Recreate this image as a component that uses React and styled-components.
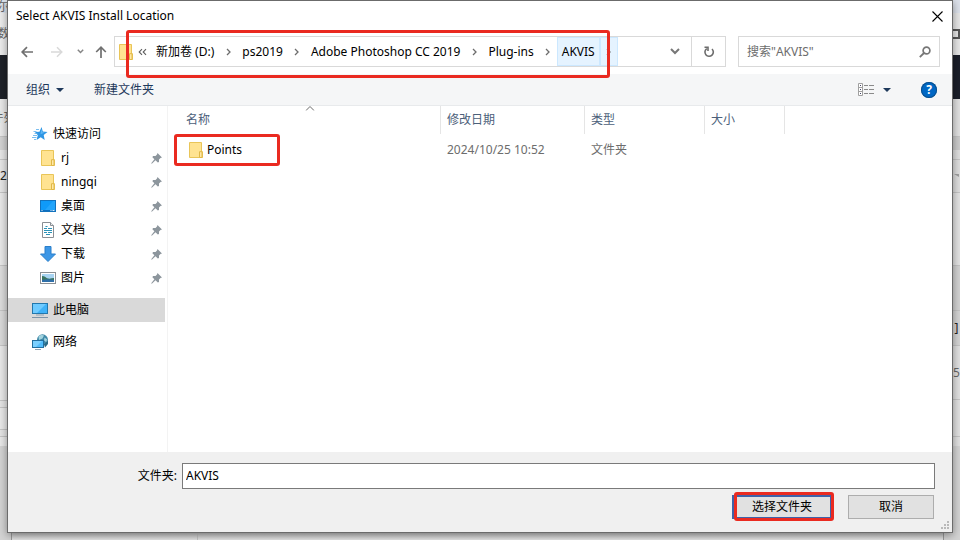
import React, { useState } from "react";
import styled, { createGlobalStyle, css } from "styled-components";

const places = [
  { name: "rj", icon: "folder" },
  { name: "ningqi", icon: "folder" },
  { name: "桌面", icon: "desktop" },
  { name: "文档", icon: "document" },
  { name: "下载", icon: "download" },
  { name: "图片", icon: "picture" },
];

const crumbs = ["新加卷 (D:)", "ps2019", "Adobe Photoshop CC 2019", "Plug-ins"];

// windows behind the dialog, top to bottom
const leftBands = [
  { h: 13, bg: "#dfe4ec", text: "尔" },
  { h: 42, bg: "#ececec", text: "数" },
  { h: 44, bg: "#1f2229" },
  { h: 37, bg: "#e9e9e9", text: "件列" },
  { h: 14, bg: "#d3d3d3", line: true },
  { h: 9, bg: "#e6e6e6" },
  { h: 33, bg: "#e6e6e6", line: true, text: "2", dark: true },
  { h: 73, bg: "#e8e8e8", line: true },
  { h: 45, bg: "#dcdcdc", line: true },
  { h: 35, bg: "#d9d9d9", line: true },
  { h: 55, bg: "#e8e8e8", line: true },
  { h: 7, bg: "#e4e4e4", line: true },
  { h: 22, bg: "#e8e8e8", line: true },
  { h: 7, bg: "#e4e4e4", line: true },
  { h: 10, bg: "#e8e8e8", line: true },
];

const rightBands = [
  { h: 13, bg: "#dce1ea" },
  { h: 42, bg: "#e6e6e6", box: true },
  { h: 44, bg: "#1b1f2a" },
  { h: 37, bg: "#e0e0e0" },
  { h: 14, bg: "#cbcbcb", line: true },
  { h: 9, bg: "#dedede" },
  { h: 33, bg: "#dedede", line: true, caret: true },
  { h: 73, bg: "#e2e2e2", line: true },
  { h: 45, bg: "#d2d2d2", line: true },
  { h: 35, bg: "#d4d4d4", line: true, text: "]", dark: true },
  { h: 54, bg: "#e0e0e0", line: true, text: "5" },
  { h: 37, bg: "#e0e0e0", line: true },
  { h: 10, bg: "#e0e0e0", line: true },
];

function Strip({ bands }) {
  return (
    <StripColumn aria-hidden="true">
      {bands.map((band, i) => (
        <Band key={i} $h={band.h} $bg={band.bg} $line={band.line} $dark={band.dark}>
          {band.box && <WindowGlyph />}
          {band.caret && (
            <svg width="5" height="4" viewBox="0 0 5 4">
              <path d="M0 0h5v3z" fill="#a0a0a0" />
            </svg>
          )}
          {band.text}
        </Band>
      ))}
    </StripColumn>
  );
}

function FolderIcon() {
  return (
    <svg width="14" height="16" viewBox="0 0 14 16">
      <path d="M.5.5h12v9.200h1v5.800H.5z" fill="#ffe391" stroke="#e9c558" />
      <path d="M10.500 15.500V9.700h2.500v5.800z" fill="#ffe9a8" stroke="#e0b848" />
    </svg>
  );
}

function PlaceIcon({ type }) {
  switch (type) {
    case "folder":
      return <FolderIcon />;
    case "desktop":
      return (
        <svg width="16" height="12" viewBox="0 0 16 12">
          <rect x=".5" y=".5" width="15" height="11" fill="#0f9af8" stroke="#1272bd" />
          <path d="M5 10 13 1h2v9z" fill="#23a5fb" />
          <path d="M1 10.500h14" stroke="#0d6fc0" />
          <path d="M1.500 10.500h1m8 0h1m1 0h2" stroke="#dff1ff" />
        </svg>
      );
    case "document":
      return (
        <svg width="12" height="16" viewBox="0 0 12 16">
          <path d="M.5.5h8l3 3v12H.5z" fill="#fff" stroke="#8a8f94" />
          <path d="M8.500.5v3h3" fill="#e8eaec" stroke="#8a8f94" />
          <path d="M3.500 4.500h2M2 6.500h3M6 6.500h4M2 8.500h8M2 10.500h3M6 10.500h4M4 12.500h4" stroke="#2c93b8" />
        </svg>
      );
    case "download":
      return (
        <svg width="16" height="16" viewBox="0 0 16 16">
          <path d="M5 .5h6v7.500h4.500L8 15.500.5 8H5z" fill="#3d97e6" stroke="#2b7fca" />
        </svg>
      );
    case "picture":
      return (
        <svg width="16" height="12" viewBox="0 0 16 12">
          <rect x=".5" y=".5" width="15" height="11" fill="#fff" stroke="#8b9095" />
          <path d="M2 2h12v8H2z" fill="#a8d4f2" />
          <path d="M2 4c3 0 4 2 6 2.500S12 6 14 6v2H2z" fill="#3a7561" />
          <path d="M2 8c4-1 8-1 12 0v2H2z" fill="#2f6fa8" />
        </svg>
      );
    case "star":
      return (
        <svg width="16" height="14" viewBox="0 0 16 14">
          <path
            d="M9.500 0 10.800 4.500 15.500 5 11.700 8l1 5-4-2.700L4.500 13l1.300-4.800L3 5l4.500-.3z"
            fill="#2f96e4"
          />
          <path d="M9.300 2 10.300 5.300l2.700.3-4.500 1.700z" fill="#5fb8f5" />
          <path d="M4 2.500h3M1.500 4.500h3M2.500 6.500h3M1 8.500h4M0 10.500h4.500M2 12.500h2" stroke="#58adec" strokeWidth=".8" />
        </svg>
      );
    case "computer":
      return (
        <svg width="16" height="16" viewBox="0 0 16 16">
          <rect x=".5" y="1.500" width="15" height="10" fill="#3fb2f8" stroke="#2378ad" />
          <path d="M1 2h13L5 11H1z" fill="#6fcbff" />
          <path d="M4 13h8" stroke="#8fa4b5" />
          <path d="M0 15.500h16" stroke="#7c94a8" />
        </svg>
      );
    default:
      return (
        <svg width="16" height="16" viewBox="0 0 16 16">
          <circle cx="10.500" cy="5.800" r="5.500" fill="#3f89a8" />
          <path d="M6.500 2.500C8.500.8 11 .8 12 1.600L10.500 4.500 7 6zM12.500 3.500l2.500 1.700-.7 3-2.300-2z" fill="#a3d3de" />
          <path d="M12 10.500l4-4v3.500L13 13.500z" fill="#2a6a85" />
          <rect x=".5" y="6.500" width="11" height="7" fill="#52bdfb" stroke="#226f9f" />
          <path d="M1 7h9l-6 6H1z" fill="#7bd0ff" />
          <path d="M3 15.500h6" stroke="#8fa4b5" />
        </svg>
      );
  }
}

function PinIcon() {
  return (
    <svg width="11" height="11" viewBox="0 0 11 11">
      <path d="M6.500 0 11 4.500 9.500 5 8 6.500 8 9 6.800 9.600 4.500 7.300.8 10.800.2 10.200 3.400 6.200 1.400 4.200 2 3h2.500L6 1.500z" fill="#8d969d" />
    </svg>
  );
}

function Chevron() {
  return (
    <svg width="5" height="8" viewBox="0 0 5 8">
      <path d="M1 1l3 3-3 3" fill="none" stroke="#6d6d6d" strokeWidth="1.300" />
    </svg>
  );
}

function Caret() {
  return (
    <svg width="8" height="4" viewBox="0 0 8 4">
      <path d="M0 0h8L4 4z" fill="#1e395b" />
    </svg>
  );
}

export default function App() {
  const [folder, setFolder] = useState("AKVIS");
  const [query, setQuery] = useState("");

  return (
    <Desktop>
      <GlobalStyle />
      <Strip bands={leftBands} />
      <Dialog role="dialog" aria-labelledby="dialog-title">
        <TitleBar>
          <Title id="dialog-title">Select AKVIS Install Location</Title>
          <IconButton $w={30} aria-label="关闭">
            <svg width="11" height="11" viewBox="0 0 11 11">
              <path d="M.5.5l10 10M10.500.5l-10 10" stroke="#000" strokeWidth="1.100" />
            </svg>
          </IconButton>
        </TitleBar>

        <NavBar>
          <IconButton $w={30} aria-label="后退">
            <svg width="12" height="12" viewBox="0 0 12 12">
              <path d="M12 6H1.500M6 1.200 1.200 6 6 10.800" fill="none" stroke="#707070" strokeWidth="1.700" />
            </svg>
          </IconButton>
          <IconButton $w={30} aria-label="前进" disabled>
            <svg width="12" height="12" viewBox="0 0 12 12">
              <path d="M0 6h10.500M6 1.200 10.800 6 6 10.800" fill="none" stroke="#d9d9d9" strokeWidth="1.500" />
            </svg>
          </IconButton>
          <IconButton $w={16} aria-label="最近浏览的位置">
            <svg width="7" height="5" viewBox="0 0 7 5">
              <path d="M.8.8l2.700 2.700L6.200.8" fill="none" stroke="#858585" strokeWidth="1.500" />
            </svg>
          </IconButton>
          <IconButton $w={26} aria-label="上移">
            <svg width="12" height="12" viewBox="0 0 12 12">
              <path d="M6 12V1.500M1.200 6 6 1.200 10.800 6" fill="none" stroke="#707070" strokeWidth="1.700" />
            </svg>
          </IconButton>
          <AddressBar>
            <CrumbList aria-label="地址">
              <FolderIcon />
              <Overflow aria-label="更多">
                <svg width="9" height="8" viewBox="0 0 9 8">
                  <path d="M4 1.200 1.200 4 4 6.800M8 1.200 5.200 4 8 6.800" fill="none" stroke="#5d5d5d" strokeWidth="1.100" />
                </svg>
              </Overflow>
              {crumbs.map((crumb) => (
                <React.Fragment key={crumb}>
                  <Crumb>{crumb}</Crumb>
                  <CrumbArrow aria-label={crumb + " 子文件夹"}>
                    <Chevron />
                  </CrumbArrow>
                </React.Fragment>
              ))}
              <Crumb $active>AKVIS</Crumb>
              <CrumbArrow $active aria-label="AKVIS 子文件夹">
                <Chevron />
              </CrumbArrow>
              <Highlight $inset="-7px 8px -12px 11px" />
            </CrumbList>
            <AddressTools>
              <IconButton $w={32} aria-label="以前的位置">
                <svg width="10" height="7" viewBox="0 0 10 7">
                  <path d="M1 1l4 4 4-4" fill="none" stroke="#777" strokeWidth="2" />
                </svg>
              </IconButton>
              <RefreshButton $w={34} aria-label="刷新">
                <svg width="12" height="12" viewBox="0 0 12 12">
                  <path d="M9 3A4.200 4.200 0 1 1 3.800 2.600" fill="none" stroke="#6d6d6d" strokeWidth="1.600" />
                  <path d="M1.500 1.300H5V5" fill="none" stroke="#6d6d6d" strokeWidth="1.600" />
                </svg>
              </RefreshButton>
            </AddressTools>
          </AddressBar>
          <SearchBox>
            <SearchInput
              aria-label="搜索"
              placeholder={'搜索"AKVIS"'}
              value={query}
              onChange={(e) => setQuery(e.target.value)}
            />
            <svg width="12" height="12" viewBox="0 0 12 12">
              <circle cx="7.500" cy="4.500" r="3.400" fill="none" stroke="#777" strokeWidth="1.700" />
              <path d="M5 7 .8 11.200" stroke="#777" strokeWidth="1.800" />
            </svg>
          </SearchBox>
        </NavBar>

        <Toolbar>
          <ToolButton>
            组织 <Caret />
          </ToolButton>
          <ToolButton>新建文件夹</ToolButton>
          <ViewTools>
            <ViewButton aria-label="更改您的视图">
              <svg width="16" height="13" viewBox="0 0 16 13">
                <path d="M.5.5h4v12h-4zM.5 4.500h4M.5 8.500h4" fill="#fff" stroke="#a0a0a0" />
                <path d="M2 2.500h1M2 6.500h1M2 10.500h1" stroke="#446" />
                <path d="M6 2.500h4m1 0h5M6 6.500h4m1 0h5M6 10.500h4m1 0h5" stroke="#8a8a8a" />
              </svg>
              <Caret />
            </ViewButton>
            <HelpButton aria-label="获取帮助">?</HelpButton>
          </ViewTools>
        </Toolbar>

        <Content>
          <Sidebar aria-label="位置">
            <Place>
              <IconSlot>
                <PlaceIcon type="star" />
              </IconSlot>
              快速访问
            </Place>
            {places.map((place) => (
              <Place key={place.name} $nested>
                <IconSlot>
                  <PlaceIcon type={place.icon} />
                </IconSlot>
                {place.name}
                <PinSlot>
                  <PinIcon />
                </PinSlot>
              </Place>
            ))}
            <Place $root $selected>
              <IconSlot>
                <PlaceIcon type="computer" />
              </IconSlot>
              此电脑
            </Place>
            <Place $root>
              <IconSlot>
                <PlaceIcon type="network" />
              </IconSlot>
              网络
            </Place>
          </Sidebar>
          <FilePane>
            <FileTable>
              <colgroup>
                <Col $w={273} />
                <Col $w={144} />
                <Col $w={120} />
                <Col $w={80} />
                <col />
              </colgroup>
              <thead>
                <tr>
                  <HeadCell $first>
                    <SortButton>
                      名称
                      <SortMark width="9" height="5" viewBox="0 0 9 5">
                        <path d="M.5 4.500l4-4 4 4" fill="none" stroke="#6b6b6b" />
                      </SortMark>
                    </SortButton>
                  </HeadCell>
                  <HeadCell>修改日期</HeadCell>
                  <HeadCell>类型</HeadCell>
                  <HeadCell>大小</HeadCell>
                  <td />
                </tr>
              </thead>
              <tbody>
                <tr>
                  <Cell $first>
                    <FileName>
                      <FolderIcon />
                      Points
                      <Highlight $inset="-8px -38px -8px -15px" />
                    </FileName>
                  </Cell>
                  <Cell>2024/10/25 10:52</Cell>
                  <Cell>文件夹</Cell>
                  <Cell />
                  <td />
                </tr>
              </tbody>
            </FileTable>
          </FilePane>
        </Content>

        <Footer>
          <FieldRow>
            <FieldLabel htmlFor="folder">文件夹:</FieldLabel>
            <FieldInput id="folder" value={folder} onChange={(e) => setFolder(e.target.value)} />
          </FieldRow>
          <ButtonRow>
            <ActionButton $primary>
              选择文件夹
              <Highlight $inset="-5px -4px -4px 0" />
            </ActionButton>
            <ActionButton>取消</ActionButton>
          </ButtonRow>
          <Grip width="9" height="9" viewBox="0 0 9 9">
            <path d="M6 0h2v2H6zM3 3h2v2H3zM6 3h2v2H6zM0 6h2v2H0zM3 6h2v2H3zM6 6h2v2H6z" fill="#b9b9b9" />
          </Grip>
        </Footer>
      </Dialog>
      <Strip bands={rightBands} />
      <BottomStrip aria-hidden="true">
        <span />
      </BottomStrip>
    </Desktop>
  );
}

const GlobalStyle = createGlobalStyle`
  * {
    box-sizing: border-box;
  }

  body {
    margin: 0;
    font-family: "Noto Sans", "Noto Sans CJK SC", sans-serif;
    font-size: 12px;
    line-height: 16px;
    color: #000;
  }

  button, input {
    font: inherit;
    color: inherit;
  }

  button {
    padding: 0;
    border: none;
    background: none;
    white-space: nowrap;
  }

  svg {
    display: block;
    flex-shrink: 0;
  }
`;

const Desktop = styled.div`
  display: grid;
  grid-template-columns: 7px minmax(0, 1fr) 7px;
  grid-template-rows: 1fr 7px;
  min-height: 100vh;
  background: #d3d3d3;
  overflow: hidden;
`;

const StripColumn = styled.div`
  grid-row: 1 / 3;
  display: flex;
  flex-direction: column;
  overflow: hidden;
`;

const Band = styled.div`
  display: flex;
  align-items: center;
  justify-content: center;
  flex-shrink: 0;
  height: ${(props) => props.$h}px;
  background: ${(props) => props.$bg};
  border-top: ${(props) => (props.$line ? "1px solid #c4c4c4" : "none")};
  color: ${(props) => (props.$dark ? "#222" : "#666")};
  overflow: hidden;
  white-space: nowrap;
`;

const WindowGlyph = styled.span`
  width: 7px;
  height: 10px;
  border: 2px solid #555;
  border-left: none;
  flex-shrink: 0;
`;

const BottomStrip = styled.div`
  grid-column: 2;
  grid-row: 2;
  display: flex;
  margin: 0 9px 0 4px;
  border: solid #999;
  border-width: 0 1px;
  background: linear-gradient(#c4c4c4, #e4e4e4);

  span {
    width: 20%;
    border-right: 1px solid #c4c4c4;
  }
`;

const Dialog = styled.main`
  grid-column: 2;
  grid-row: 1;
  position: relative;
  display: flex;
  flex-direction: column;
  background: #fff;
  border: 1px solid #6b6b6b;
  box-shadow: 0 2px 8px rgba(0, 0, 0, 0.4);
`;

const TitleBar = styled.header`
  display: flex;
  align-items: center;
  justify-content: space-between;
  height: 30px;
  padding-left: 8px;
`;

const Title = styled.h1`
  margin: 0;
  font-size: 12px;
  font-weight: 400;
`;

const IconButton = styled.button`
  display: flex;
  align-items: center;
  justify-content: center;
  width: ${(props) => props.$w}px;
  height: 100%;
  flex-shrink: 0;
`;

const NavBar = styled.nav`
  display: flex;
  height: 31px;
  margin: 5px 12px 7px 4px;
`;

const AddressBar = styled.div`
  display: flex;
  justify-content: space-between;
  flex: 1;
  min-width: 0;
  margin-right: 12px;
  border: 1px solid #d9d9d9;
`;

const CrumbList = styled.div`
  position: relative;
  display: flex;
  align-items: center;
  padding-left: 4px;
`;

const Overflow = styled.button`
  display: flex;
  justify-content: center;
  width: 18px;
`;

const activeCrumb = css`
  background: #e5f3ff;
  box-shadow: inset 0 0 0 1px #cce8ff;
`;

const Crumb = styled.button`
  height: 100%;
  padding: 0 5px;
  ${(props) => props.$active && activeCrumb}
`;

const CrumbArrow = styled.button`
  display: flex;
  align-items: center;
  justify-content: center;
  width: 18px;
  height: 100%;
  ${(props) => props.$active && activeCrumb}
`;

// red marker frame drawn over the steps to follow
const Highlight = styled.span`
  position: absolute;
  inset: ${(props) => props.$inset};
  border: 3px solid #ea2a20;
  border-radius: 3px;
  pointer-events: none;
`;

const AddressTools = styled.div`
  display: flex;
`;

const RefreshButton = styled(IconButton)`
  border-left: 1px solid #d9d9d9;
`;

const SearchBox = styled.div`
  display: flex;
  align-items: center;
  width: 202px;
  padding: 0 8px;
  border: 1px solid #d9d9d9;
`;

const SearchInput = styled.input`
  flex: 1;
  min-width: 0;
  padding: 0;
  border: none;
  outline: none;

  &::placeholder {
    color: #6d6d6d;
    opacity: 1;
  }
`;

const Toolbar = styled.div`
  display: flex;
  align-items: center;
  gap: 30px;
  height: 32px;
  padding: 0 15px 0 18px;
  background: #f5f6f7;
  border-bottom: 1px solid #e8eaec;
  color: #1e395b;
`;

const ToolButton = styled.button`
  display: flex;
  align-items: center;
  gap: 6px;
`;

const ViewTools = styled.div`
  display: flex;
  align-items: center;
  gap: 30px;
  margin-left: auto;
`;

const ViewButton = styled.button`
  display: flex;
  align-items: center;
  gap: 9px;
`;

const HelpButton = styled.button`
  width: 16px;
  height: 16px;
  border-radius: 50%;
  background: #0067c4;
  box-shadow: inset 0 0 0 1px #0a4f8c;
  color: #fff;
  font-weight: 700;
  line-height: 16px;
`;

const Content = styled.div`
  display: flex;
  flex: 1;
`;

const Sidebar = styled.aside`
  width: 160px;
  flex-shrink: 0;
  padding: 16px 2px 0 0;
  border-right: 1px solid #f3f3f3;
`;

const Place = styled.button`
  display: flex;
  align-items: center;
  gap: 5px;
  width: 100%;
  height: 24px;
  margin-top: ${(props) => (props.$root ? 8 : 0)}px;
  padding-left: ${(props) => (props.$nested ? 32 : 24)}px;
  background: ${(props) => (props.$selected ? "#d9d9d9" : "none")};
`;

const IconSlot = styled.span`
  display: flex;
  justify-content: center;
  width: 16px;
`;

const PinSlot = styled.span`
  margin-left: auto;
  padding-right: 3px;
`;

const FilePane = styled.section`
  flex: 1;
  min-width: 0;
`;

const FileTable = styled.table`
  width: 100%;
  table-layout: fixed;
  border-collapse: separate;
  border-spacing: 0;
`;

const Col = styled.col`
  width: ${(props) => props.$w}px;
`;

const HeadCell = styled.th`
  height: 28px;
  padding: 0 0 0 ${(props) => (props.$first ? 12 : 6)}px;
  border-right: 1px solid #e5e5e5;
  color: #4c607a;
  font-weight: 400;
  text-align: left;
`;

const SortButton = styled.button`
  position: relative;
  width: 100%;
  height: 28px;
  padding-left: 6px;
  text-align: left;
`;

const SortMark = styled.svg`
  position: absolute;
  top: 0;
  left: 50%;
  transform: translateX(-50%);
`;

const Cell = styled.td`
  height: 32px;
  padding: 0 0 0 ${(props) => (props.$first ? 21 : 6)}px;
  color: ${(props) => (props.$first ? "#000" : "#6d6d6d")};
`;

const FileName = styled.span`
  position: relative;
  display: inline-flex;
  align-items: center;
  gap: 4px;
  vertical-align: middle;
`;

const Footer = styled.footer`
  position: relative;
  display: flex;
  flex-direction: column;
  gap: 6px;
  padding: 11px 17px 13px 8px;
  background: #f0f0f0;
`;

const FieldRow = styled.div`
  display: flex;
  align-items: center;
  gap: 5px;
`;

const FieldLabel = styled.label`
  width: 161px;
  text-align: right;
`;

const FieldInput = styled.input`
  flex: 1;
  min-width: 0;
  height: 26px;
  padding: 0 3px 2px;
  border: 1px solid #7a7a7a;
  background: #fff;
  outline: none;
`;

const ButtonRow = styled.div`
  display: flex;
  justify-content: flex-end;
  gap: 16px;
  padding-right: 1px;
`;

const ActionButton = styled.button`
  position: relative;
  width: ${(props) => (props.$primary ? 100 : 86)}px;
  height: 24px;
  border: ${(props) => (props.$primary ? "2px solid #3f62a8" : "1px solid #adadad")};
  background: #e1e1e1;
`;

const Grip = styled.svg`
  position: absolute;
  right: 2px;
  bottom: 2px;
`;
